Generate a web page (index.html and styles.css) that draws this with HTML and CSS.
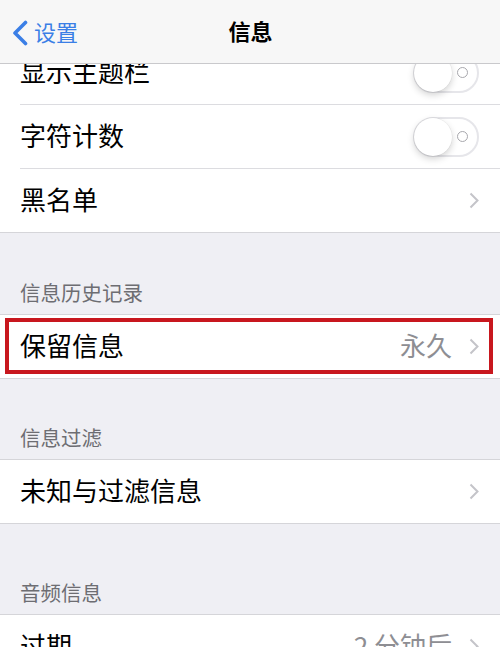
FILE: index.html
```html
<!DOCTYPE html>
<html lang="zh">
<head>
<meta charset="utf-8">
<title>信息</title>
<link rel="stylesheet" href="styles.css">
</head>
<body>
<div class="screen">
  <header class="nav">
    <div class="back">
      <svg class="back-icon" width="18" height="26" viewBox="0 0 18 26"><path d="M14.5 2.5 L4 13 L14.5 23.5" fill="none" stroke="#3b7fe6" stroke-width="3.6" stroke-linecap="round" stroke-linejoin="round"/></svg>
      <span>设置</span>
    </div>
    <div class="title">信息</div>
  </header>

  <main class="list">
    <section class="group">
      <div class="row">
        <span class="label">显示主题栏</span>
        <span class="toggle"><span class="knob"></span><span class="off-mark"></span></span>
      </div>
      <div class="row">
        <span class="label">字符计数</span>
        <span class="toggle"><span class="knob"></span><span class="off-mark"></span></span>
      </div>
      <div class="row">
        <span class="label">黑名单</span>
        <span class="accessory">
          <svg class="chev" width="10" height="17" viewBox="0 0 10 17"><path d="M1.5 1.5 L8.5 8.5 L1.5 15.5" fill="none" stroke="#c4c4c9" stroke-width="2"/></svg>
        </span>
      </div>
    </section>

    <div class="section-header">信息历史记录</div>
    <section class="group">
      <div class="row highlighted">
        <span class="label">保留信息</span>
        <span class="accessory">
          <span class="value">永久</span>
          <svg class="chev" width="10" height="17" viewBox="0 0 10 17"><path d="M1.5 1.5 L8.5 8.5 L1.5 15.5" fill="none" stroke="#c4c4c9" stroke-width="2"/></svg>
        </span>
      </div>
    </section>

    <div class="section-header short">信息过滤</div>
    <section class="group">
      <div class="row">
        <span class="label">未知与过滤信息</span>
        <span class="accessory">
          <svg class="chev" width="10" height="17" viewBox="0 0 10 17"><path d="M1.5 1.5 L8.5 8.5 L1.5 15.5" fill="none" stroke="#c4c4c9" stroke-width="2"/></svg>
        </span>
      </div>
    </section>

    <div class="section-header tall">音频信息</div>
    <section class="group">
      <div class="row">
        <span class="label">过期</span>
        <span class="accessory">
          <span class="value">2 分钟后</span>
          <svg class="chev" width="10" height="17" viewBox="0 0 10 17"><path d="M1.5 1.5 L8.5 8.5 L1.5 15.5" fill="none" stroke="#c4c4c9" stroke-width="2"/></svg>
        </span>
      </div>
    </section>
  </main>
</div>
</body>
</html>
```

FILE: styles.css
```css
html, body {
  margin: 0;
  padding: 0;
}

body {
  background: #efeff4;
  font-family: "Noto Sans CJK SC", "Noto Sans", sans-serif;
  color: #000;
}

.screen {
  position: relative;
  width: 500px;
  height: 647px;
  overflow: hidden;
  background: #efeff4;
}

/* Navigation bar overlays the scrolled list */
.nav {
  position: absolute;
  top: 0;
  left: 0;
  right: 0;
  height: 63px;
  background: #f7f7f7;
  border-bottom: 1px solid #c9c9cc;
  display: flex;
  align-items: center;
  justify-content: center;
  z-index: 2;
}

.back {
  position: absolute;
  left: 11px;
  top: 0;
  height: 63px;
  display: flex;
  align-items: center;
  gap: 5px;
  color: #3b7fe6;
  font-size: 22px;
  line-height: 1;
}

.back-icon {
  display: block;
  margin-top: 2px;
}

.back span {
  padding-bottom: 1px;
}

.title {
  font-size: 22px;
  font-weight: 700;
  line-height: 1;
  padding-bottom: 3px;
  padding-left: 1px;
}

.list {
  padding-top: 40px;
}

.group {
  background: #fff;
  border-top: 1px solid #d5d5d9;
}

.row {
  position: relative;
  height: 64px;
  display: flex;
  align-items: center;
  justify-content: space-between;
  padding: 0 21px 1px 20px;
  box-sizing: border-box;
}

/* Separator in the row's last pixel: inset between rows, full width at the group's end */
.row::after {
  content: "";
  position: absolute;
  left: 20px;
  right: 0;
  bottom: 0;
  height: 1px;
  background: #dcdce0;
}

.row:last-child::after {
  left: 0;
  background: #d5d5d9;
}

.label {
  font-size: 26px;
  line-height: 1;
  padding-bottom: 4px;
}

.accessory {
  display: flex;
  align-items: center;
  gap: 17px;
}

.value {
  font-size: 26px;
  line-height: 1;
  color: #8e8e93;
  padding-bottom: 4px;
}

.chev {
  display: block;
}

/* Off switch */
.toggle {
  position: relative;
  width: 66px;
  height: 40px;
  box-sizing: border-box;
  border: 2px solid #e6e6ea;
  border-radius: 20px;
  background: #fff;
  display: flex;
  align-items: center;
  justify-content: flex-end;
  padding-right: 9px;
}

.knob {
  position: absolute;
  left: -1px;
  top: -1px;
  width: 38px;
  height: 38px;
  border-radius: 50%;
  background: #fff;
  box-shadow: 0 3px 7px rgba(0, 0, 0, 0.18), 0 0 0 0.5px rgba(0, 0, 0, 0.06);
}

.off-mark {
  width: 11px;
  height: 11px;
  box-sizing: border-box;
  border: 1.6px solid #a8a8ad;
  border-radius: 50%;
}

/* Annotation frame drawn over the row */
.highlighted::before {
  content: "";
  position: absolute;
  left: 5px;
  right: 7px;
  top: 3px;
  bottom: 5px;
  border: 4px solid #c8171e;
  pointer-events: none;
  z-index: 1;
}

.section-header {
  height: 81px;
  box-sizing: border-box;
  display: flex;
  align-items: flex-end;
  padding: 0 20px 10px;
  font-size: 20.5px;
  line-height: 24px;
  color: #6d6d72;
}

.section-header.short {
  height: 80px;
}

.section-header.tall {
  height: 90px;
}
```
